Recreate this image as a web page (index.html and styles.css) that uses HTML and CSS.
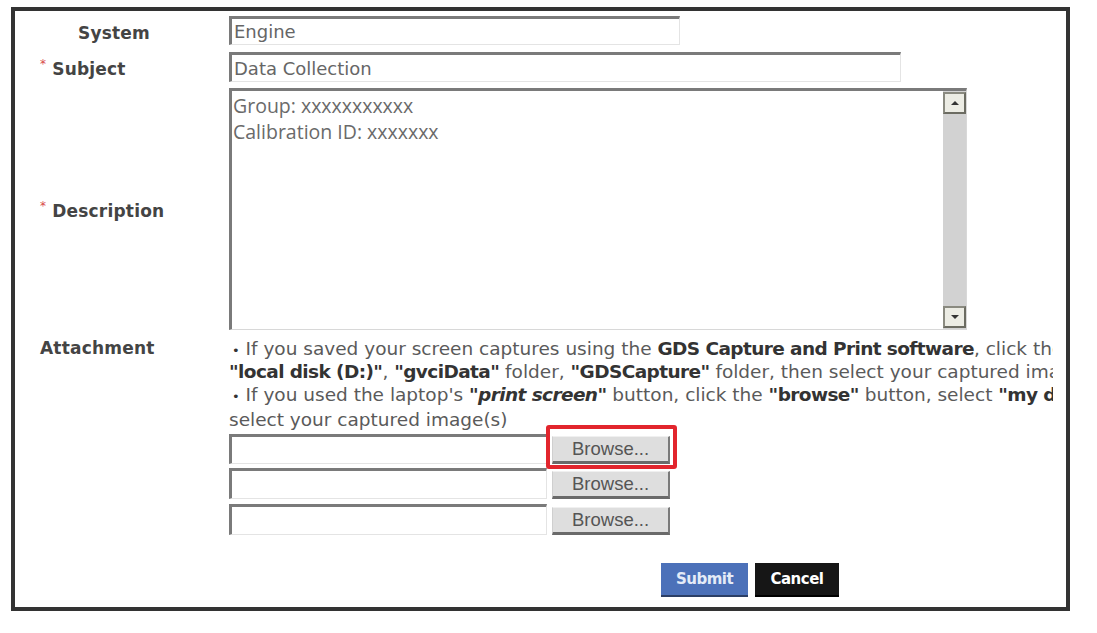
FILE: index.html
```html
<!DOCTYPE html>
<html>
<head>
<meta charset="utf-8">
<link rel="stylesheet" href="styles.css">
</head>
<body>
<div class="frame">
  <div class="row row-system">
    <div class="label label-system">System</div>
    <div class="field input input-system">Engine</div>
  </div>
  <div class="row row-subject">
    <div class="label"><span class="req">*</span>Subject</div>
    <div class="field input input-subject">Data Collection</div>
  </div>
  <div class="row row-desc">
    <div class="label"><span class="req">*</span>Description</div>
    <div class="field textarea">
      <div class="ta-text">
        <div>Group: xxxxxxxxxxx</div>
        <div>Calibration ID: xxxxxxx</div>
      </div>
      <div class="scrollbar">
        <div class="sb-btn"><span class="tri-up"></span></div>
        <div class="sb-track"></div>
        <div class="sb-btn"><span class="tri-down"></span></div>
      </div>
    </div>
  </div>
  <div class="row row-attach">
    <div class="label label-attach">Attachment</div>
    <div class="field help">
      <div class="line"><span class="dot">•</span> If you saved your screen captures using the <b>GDS Capture and Print software</b>, click the <b>"browse"</b> button, select</div>
      <div class="line"><b>"local disk (D:)"</b>, <b>"gvciData"</b> folder, <b>"GDSCapture"</b> folder, then select your captured image(s)</div>
      <div class="line"><span class="dot">•</span> If you used the laptop's <b>"<i>print screen</i>"</b> button, click the <b>"browse"</b> button, select <b>"my documents"</b> folder, then</div>
      <div class="line">select your captured image(s)</div>
    </div>
  </div>
  <div class="row row-file row-file1">
    <div class="label"></div>
    <div class="field file">
      <div class="file-input"></div>
      <div class="browse highlighted">Browse...<span class="mark"></span></div>
    </div>
  </div>
  <div class="row row-file row-file2">
    <div class="label"></div>
    <div class="field file">
      <div class="file-input"></div>
      <div class="browse">Browse...</div>
    </div>
  </div>
  <div class="row row-file row-file3">
    <div class="label"></div>
    <div class="field file">
      <div class="file-input"></div>
      <div class="browse">Browse...</div>
    </div>
  </div>
  <div class="row row-actions">
    <div class="label"></div>
    <div class="field actions">
      <div class="btn btn-submit">Submit</div>
      <div class="btn btn-cancel">Cancel</div>
    </div>
  </div>
</div>
</body>
</html>
```

FILE: styles.css
```css
* { box-sizing: border-box; }
html, body { margin: 0; padding: 0; background: #fff; }
body {
  width: 1097px;
  height: 633px;
  overflow: hidden;
  font-family: "DejaVu Sans", Verdana, sans-serif;
}
.frame {
  margin: 7px 0 0 11px;
  width: 1059px;
  height: 604px;
  border: 4px solid #333;
  padding-top: 5px;
  display: flex;
  flex-direction: column;
}
.row { display: flex; }
.label {
  width: 214px;
  flex: none;
  font-weight: bold;
  font-size: 17px;
  color: #444;
  padding-left: 25px;
  padding-top: 4px;
  display: flex;
  align-items: center;
  letter-spacing: 0.2px;
}
.label-system { padding-left: 63px; }
.req {
  color: #d84a4a;
  font-size: 12px;
  font-weight: normal;
  margin-right: 6px;
  position: relative;
  top: -5px;
}
.field { flex: none; }
.input {
  border-top: 3px solid #7a7a7a;
  border-left: 3px solid #7a7a7a;
  border-right: 1px solid #e4e4e4;
  border-bottom: 1px solid #e4e4e4;
  font-size: 18px;
  color: #666;
  padding-left: 2px;
  display: flex;
  align-items: center;
}
.row-system { height: 29px; }
.input-system { width: 451px; height: 29px; }
.row-subject { height: 30px; margin-top: 7px; }
.input-subject { width: 672px; height: 30px; }
.row-desc { height: 242px; margin-top: 6px; }
.textarea {
  width: 738px;
  height: 242px;
  border-top: 3px solid #7a7a7a;
  border-left: 3px solid #7a7a7a;
  border-right: 1px solid #d8d8d8;
  border-bottom: 1px solid #d8d8d8;
  display: flex;
}
.ta-text {
  flex: 1;
  font-family: "Open Sans", sans-serif;
  font-size: 19.5px;
  line-height: 26px;
  color: #6a6a6a;
  padding: 2px 0 0 1px;
}
.scrollbar {
  width: 23px;
  background: #d2d2d2;
  display: flex;
  flex-direction: column;
  padding: 1px 0 1px 0;
}
.sb-btn {
  height: 22px;
  background: #ecece4;
  border: 2px solid #6c6c62;
  border-top-color: #8a8a80;
  border-left-color: #8a8a80;
  display: flex;
  align-items: center;
  justify-content: center;
}
.sb-track { flex: 1; }
.tri-up, .tri-down {
  width: 0; height: 0;
  border-left: 4px solid transparent;
  border-right: 4px solid transparent;
}
.tri-up { border-bottom: 4px solid #333; }
.tri-down { border-top: 4px solid #333; }
.row-attach { margin-top: 7px; }
.label-attach { align-items: flex-start; line-height: 23px; padding-top: 0; }
.help {
  width: 824px;
  overflow: hidden;
  font-size: 18.5px;
  line-height: 23px;
  color: #5a5a5a;
}
.help .line { white-space: nowrap; }
.help .line:first-child, .help .line:nth-child(3) { padding-left: 3px; }
.help .line:nth-child(4) { padding-top: 2px; }
.help b { color: #333; letter-spacing: -0.6px; }
.dot { font-size: 13px; color: #333; line-height: 0; }
.row-file { height: 30px; }
.row-file1 { margin-top: 3px; }
.row-file2 { margin-top: 4px; height: 31px; }
.row-file3 { margin-top: 5px; height: 31px; }
.file { display: flex; align-items: flex-end; gap: 5px; }
.file-input {
  width: 318px;
  height: 100%;
  border-top: 3px solid #7a7a7a;
  border-left: 3px solid #7a7a7a;
  border-right: 1px solid #e4e4e4;
  border-bottom: 1px solid #e4e4e4;
}
.browse {
  position: relative;
  width: 118px;
  height: 28px;
  background: #dedede;
  border-top: 1px solid #f0f0f0;
  border-left: 1px solid #cfcfcf;
  border-right: 2px solid #7a7a7a;
  border-bottom: 3px solid #6a6a6a;
  font-family: "Liberation Sans", Arial, sans-serif;
  font-size: 18.5px;
  color: #555;
  display: flex;
  align-items: center;
  padding-left: 19px;
}
.mark {
  position: absolute;
  top: -12px;
  bottom: -8px;
  left: -7px;
  right: -9px;
  border: 4px solid #e2252d;
  border-radius: 3px;
}
.row-actions { margin-top: 28px; }
.actions { display: flex; gap: 7px; padding-left: 432px; }
.btn {
  height: 34px;
  font-weight: bold;
  font-size: 15px;
  color: #fff;
  display: flex;
  align-items: center;
  justify-content: center;
  letter-spacing: -0.5px;
}
.btn-submit {
  width: 87px;
  background: #4c71b9;
  border-bottom: 2px solid #2c3f66;
  color: #e4ebf7;
}
.btn-cancel {
  width: 84px;
  background: #161616;
  border-bottom: 2px solid #000;
}
```
